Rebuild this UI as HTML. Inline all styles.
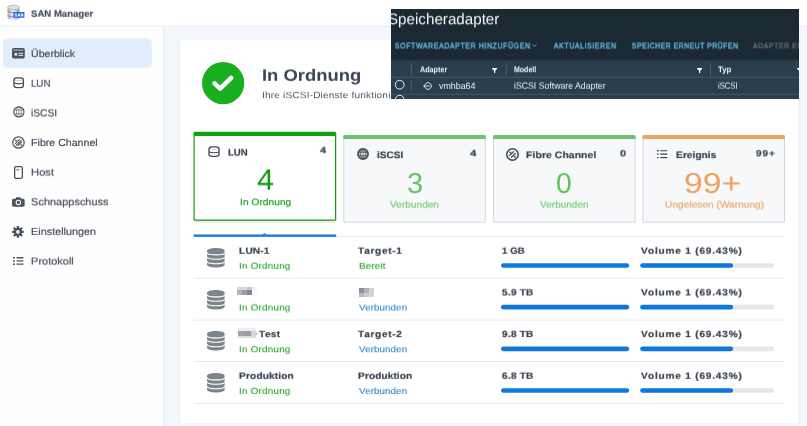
<!DOCTYPE html>
<html><head><meta charset="utf-8"><title>SAN Manager</title>
<style>
html,body{margin:0;padding:0}
body{width:807px;height:426px;overflow:hidden;position:relative;background:#f4f7fb;font-family:"Liberation Sans",sans-serif}
.abs{position:absolute}
.t{position:absolute;white-space:pre;line-height:1;text-rendering:geometricPrecision;transform-origin:0 50%;font-family:"Liberation Sans",sans-serif}
#hdr{left:0;top:0;width:807px;height:26px;background:#fff;border-bottom:1px solid #e3e8ee}
#side{left:0;top:27px;width:163px;height:399px;background:#fbfcfd;border-right:1px solid #e6ebf1}
#act{left:3px;top:38.5px;width:149px;height:29.5px;background:#e2edfb;border-radius:4px}
#panel{left:179px;top:38.5px;width:620px;height:385px;background:#fff;border:1px solid #e7ebf1;box-sizing:border-box}
.card{position:absolute;top:135px;width:142.5px;height:88px;box-sizing:border-box;background:#f5f8fa;border:1px solid #dfe4ea;border-top:4px solid #6cc56a;border-radius:1px}
.row{position:absolute;left:194px;width:591px;height:1px;background:#e6eaef}
.bar{position:absolute;height:4.6px;border-radius:3px;background:#e4e7ea}
.bar i{position:absolute;left:0;top:0;height:100%;border-radius:3px;background:#0f7be0;display:block}
.px{position:absolute}
svg{position:absolute;overflow:visible}
#ov{left:391.2px;top:9px;width:408px;height:89.6px;background:#1b2a32;overflow:hidden}
</style></head><body>
<svg width="0" height="0" style="display:none">
<defs>
<symbol id="db" viewBox="0 0 18 20">
 <path fill="#7c858a" d="M0 2.900C0 1.300 4 0 9 0s9 1.300 9 2.900V17.100c0 1.600-4 2.900-9 2.900s-9-1.300-9-2.900z"/>
 <path fill="none" stroke="#fff" stroke-width="1.100" d="M0 4.500c0 1.400 4 2.500 9 2.500s9-1.100 9-2.500M0 9c0 1.400 4 2.500 9 2.500s9-1.100 9-2.500M0 13.500c0 1.400 4 2.500 9 2.500s9-1.100 9-2.500"/>
</symbol>
<symbol id="cyl" viewBox="0 0 12 12">
 <path fill="none" stroke="#434a53" stroke-width="1.350" d="M1 3.500Q1 1.100 3.800 .95Q6 .85 8.200 .95Q11 1.100 11 3.500V8.500Q11 10.900 8.200 11.050Q6 11.150 3.800 11.050Q1 10.900 1 8.500z"/>
 <path fill="none" stroke="#434a53" stroke-width="1.100" d="M1 5.900c.8 .9 2.600 1.200 5 1.200s4.200-.3 5-1.200"/>
 <path fill="none" stroke="#434a53" stroke-width=".5" opacity=".55" d="M1.700 2.800c.9 .7 2.400 1 4.300 1s3.400-.3 4.300-1"/>
</symbol>
<symbol id="globe" viewBox="0 0 12 12">
 <circle cx="6" cy="6" r="5.200" fill="none" stroke="#4b545e" stroke-width="1.200"/>
 <ellipse cx="6" cy="6" rx="2.500" ry="5.200" fill="none" stroke="#4b545e" stroke-width=".6"/>
 <path stroke="#4b545e" stroke-width=".6" fill="none" d="M1.300 4.100h9.400M1.300 7.900h9.400M6 .8v10.400"/>
</symbol>
<symbol id="fc" viewBox="0 0 13 13">
 <circle cx="6.500" cy="6.500" r="5.700" fill="none" stroke="#4b545e" stroke-width="1.200"/>
 <path stroke="#4b545e" stroke-width="1.100" stroke-linecap="round" fill="none" d="M3.500 7.400l3.800-3.800M4.300 9.200l4.900-4.900M5.900 9.700l3.700-3.700"/>
 <circle cx="3.900" cy="4.400" r=".9" fill="#4b545e"/><circle cx="9.200" cy="8.800" r=".9" fill="#4b545e"/>
</symbol>
<symbol id="list" viewBox="0 0 11 9">
 <path fill="#4b545e" d="M0 0h2v1.700H0zM0 3.650h2v1.700H0zM0 7.300h2V9H0zM3.600 .1h7.400v1.500H3.600zM3.600 3.750h7.400v1.500H3.600zM3.600 7.400h7.400v1.500H3.600z"/>
</symbol>
<symbol id="globe2" viewBox="0 0 12 12">
 <circle cx="6" cy="6" r="5.100" fill="#c2c6ca" stroke="#454b54" stroke-width="1.650"/>
 <ellipse cx="6" cy="6" rx="2.300" ry="4.600" fill="none" stroke="#50565e" stroke-width=".9"/>
 <path stroke="#50565e" stroke-width=".9" fill="none" d="M1.500 4.300h9M1.500 7.700h9M6 1.200v9.600"/>
 <rect x="4" y="4.800" width="1.500" height="2.400" fill="#e9ebee"/><rect x="6.500" y="4.800" width="1.500" height="2.400" fill="#e9ebee"/>
</symbol>
<symbol id="fc2" viewBox="0 0 13 13">
 <circle cx="6.500" cy="6.500" r="5.700" fill="none" stroke="#434a53" stroke-width="1.600"/>
 <path stroke="#434a53" stroke-width="1.250" stroke-linecap="round" fill="none" d="M3.700 7.500l3.700-3.700M5.500 9.300l3.800-3.800"/>
 <circle cx="4.300" cy="4.500" r="1" fill="#434a53"/><circle cx="8.800" cy="8.700" r="1" fill="#434a53"/>
</symbol>
<symbol id="list2" viewBox="0 0 11 9">
 <path fill="#383d45" d="M0 .1h1.700v1.400H0zM0 3.800h1.700v1.400H0zM0 7.500h1.700v1.400H0zM3.400 .15h7.600v1.300H3.400zM3.400 3.850h7.600v1.300H3.400zM3.400 7.550h7.600v1.300H3.400z"/>
</symbol>
<symbol id="filt" viewBox="0 0 6 6"><path fill="#fff" d="M0 0h6v.9L3.700 3.300V6H2.300V3.300L0 .9z"/></symbol>
</defs></svg>

<svg style="left:0;top:0" width="807" height="426" viewBox="0 0 807 426">
 <rect x="0" y="0" width="807" height="26.300" fill="#fff"/>
 <rect x="0" y="25.800" width="807" height="1" fill="#e9edf1"/>
 <rect x="0" y="26.800" width="163.200" height="400" fill="#fefefe"/>
 <rect x="162.900" y="26.800" width="1.200" height="400" fill="#e9edf1"/>
 <rect x="3" y="38.500" width="148.800" height="29.200" rx="4" fill="#e3eefc"/>
 <rect x="179.300" y="38.800" width="619.500" height="385.100" fill="#fff" stroke="#ebeff4" stroke-width="1"/>
</svg>
<!-- header app icon -->
<svg style="left:6.500px;top:5px" width="19" height="16" viewBox="0 0 19 16">
 <defs><linearGradient id="g1" x1="0" x2="1"><stop offset="0" stop-color="#aeb2b5"/><stop offset=".45" stop-color="#eceeef"/><stop offset="1" stop-color="#9fa3a6"/></linearGradient></defs>
 <path fill="url(#g1)" d="M.6 2.400C.6 1.200 3.200 .2 6.500 .2s5.900 1 5.900 2.200v10.400c0 1.200-2.600 2.200-5.900 2.200S.6 14 .6 12.800z"/>
 <path fill="none" stroke="#7f8589" stroke-width=".9" d="M.6 5.600c0 1.200 2.600 2.100 5.900 2.100s5.900-.9 5.900-2.100M.6 9.800c0 1.200 2.600 2.100 5.900 2.100s5.900-.9 5.900-2.100"/>
 <ellipse cx="6.500" cy="2.400" rx="5.900" ry="2.100" fill="#dfe1e3" stroke="#9ea3a7" stroke-width=".6"/>
 <rect x="6.500" y="6.900" width="10.900" height="5.900" rx=".7" fill="#1d6df0"/>
 <path fill="#fff" d="M8 8.400h1.900v.7H8.800v.5h1.100v1.900H8v-.7h1.100v-.5H8zM10.600 11.500l.9-3.100h.9l.9 3.100h-.8l-.1-.6h-.9l-.1 .6zM13.800 8.400h.8l.9 1.800V8.400h.7v3.100h-.8l-.9-1.800v1.800h-.7z"/>
</svg>

<!-- sidebar icons -->
<svg style="left:12.200px;top:48.200px" width="12.800" height="10.600" viewBox="0 0 12.800 10.600">
 <rect x="0" y="0" width="12.800" height="10.600" rx="1.800" fill="#4b545e"/>
 <rect x="1.400" y="1.700" width="10" height=".8" fill="#cfdcec"/>
 <circle cx="3.900" cy="6.200" r="1.500" fill="#e2edfb"/>
 <rect x="6.500" y="4.800" width="4.600" height="1" fill="#e2edfb"/><rect x="6.500" y="6.900" width="4.600" height="1" fill="#e2edfb"/>
</svg>
<svg style="left:12.900px;top:77.300px" width="11.400" height="11.600" viewBox="0 0 12 12" preserveAspectRatio="none"><use href="#cyl"/></svg>
<svg style="left:12.900px;top:106.200px" width="11.800" height="11.800" viewBox="0 0 12 12"><use href="#globe"/></svg>
<svg style="left:12px;top:135.600px" width="13" height="13"><use href="#fc"/></svg>
<svg style="left:14px;top:165.500px" width="9" height="13" viewBox="0 0 9 13">
 <rect x=".65" y=".65" width="7.700" height="11.700" rx="1.300" fill="none" stroke="#4b545e" stroke-width="1.300"/>
 <path stroke="#4b545e" stroke-width="1" d="M2.300 3.800h2.800"/>
</svg>
<svg style="left:12.200px;top:196.800px" width="12.700" height="9.700" viewBox="0 0 13 10">
 <path fill="#4b545e" d="M1.500 1.700h2l.9-1.500h4.200l.9 1.500h2c.8 0 1.500.7 1.500 1.500v5.300c0 .8-.7 1.500-1.500 1.500h-10C.7 10 0 9.300 0 8.500V3.200c0-.8.7-1.500 1.500-1.500z"/>
 <circle cx="6.500" cy="5.600" r="2.300" fill="none" stroke="#fbfcfd" stroke-width="1.100"/>
</svg>
<svg style="left:12.400px;top:225.600px" width="11.800" height="11.800" viewBox="-5.900 -5.900 11.800 11.800">
 <g fill="#4b545e">
  <circle r="4.200"/>
  <g id="tooth"><rect x="-1.150" y="-5.900" width="2.300" height="2.600" rx=".4"/></g>
  <use href="#tooth" transform="rotate(45)"/><use href="#tooth" transform="rotate(90)"/><use href="#tooth" transform="rotate(135)"/><use href="#tooth" transform="rotate(180)"/><use href="#tooth" transform="rotate(225)"/><use href="#tooth" transform="rotate(270)"/><use href="#tooth" transform="rotate(315)"/>
 </g>
 <circle r="1.800" fill="#fbfcfd"/>
</svg>
<svg style="left:12.900px;top:256.900px" width="10.600" height="7.900" viewBox="0 0 11 9" preserveAspectRatio="none"><use href="#list"/></svg>

<!-- status circle -->
<svg style="left:202.200px;top:61.600px" width="42.300" height="42.300" viewBox="0 0 42.300 42.300">
 <circle cx="21.150" cy="21.150" r="21.150" fill="#1aae21"/>
 <path fill="none" stroke="#fff" stroke-width="4.400" stroke-linecap="round" stroke-linejoin="round" d="M12.500 21.300l5.600 5.400L29.200 15.900"/>
</svg>

<!-- cards -->
<svg style="left:0;top:0" width="807" height="426" viewBox="0 0 807 426">
 <defs><filter id="sh" x="-10%" y="-10%" width="120%" height="130%"><feGaussianBlur stdDeviation="1.300"/></filter></defs>
 <rect x="194.500" y="134" width="141" height="88" fill="#5a5560" opacity=".22" filter="url(#sh)"/>
 <rect x="193.500" y="131.800" width="142.700" height="88.900" rx="1.500" fill="#12a012"/>
 <rect x="194.700" y="136.100" width="140.300" height="83.400" rx=".5" fill="#fff"/>
 <g>
  <rect x="343.300" y="135" width="142.500" height="87.700" rx="1.500" fill="#d3d8de"/>
  <rect x="344.300" y="136" width="140.500" height="85.800" rx=".8" fill="#f6f8fa"/>
  <path fill="#6ac569" d="M343.300 136.500a1.500 1.500 0 0 1 1.500-1.500h139.500a1.500 1.500 0 0 1 1.500 1.500v2.400h-142.500z"/>
 </g>
 <g transform="translate(149.800 0)">
  <rect x="343.300" y="135" width="142.500" height="87.700" rx="1.500" fill="#d3d8de"/>
  <rect x="344.300" y="136" width="140.500" height="85.800" rx=".8" fill="#f6f8fa"/>
  <path fill="#6ac569" d="M343.300 136.500a1.500 1.500 0 0 1 1.500-1.500h139.500a1.500 1.500 0 0 1 1.500 1.500v2.400h-142.500z"/>
 </g>
 <g transform="translate(299.200 0)">
  <rect x="343.300" y="135" width="142.500" height="87.700" rx="1.500" fill="#d3d8de"/>
  <rect x="344.300" y="136" width="140.500" height="85.800" rx=".8" fill="#f6f8fa"/>
  <path fill="#f0a35d" d="M343.300 136.500a1.500 1.500 0 0 1 1.500-1.500h139.500a1.500 1.500 0 0 1 1.500 1.500v2.400h-142.500z"/>
 </g>
</svg>
<svg style="left:208.100px;top:145.500px" width="12" height="11.300" viewBox="0 0 12 12" preserveAspectRatio="none"><use href="#cyl"/></svg>
<svg style="left:356.900px;top:147.700px" width="12" height="12"><use href="#globe2"/></svg>
<svg style="left:506.200px;top:147.500px" width="13" height="13"><use href="#fc2"/></svg>
<svg style="left:656.500px;top:149.700px" width="10.500" height="8.400" viewBox="0 0 11 9" preserveAspectRatio="none"><use href="#list2"/></svg>

<!-- tab indicator line -->
<svg style="left:0;top:0" width="807" height="426" viewBox="0 0 807 426">
 <rect x="336" y="235.900" width="449" height="1" fill="#eaedf1"/>
 <rect x="193.700" y="234.500" width="142.500" height="2.300" fill="#1077db"/>
 <path fill="#1077db" d="M262.200 234.600L264.500 233.100L266.800 234.600z"/>
 <rect x="501" y="263.15" width="128.200" height="4.600" rx="2.300" fill="#1077db"/>
 <rect x="640.200" y="263.15" width="134" height="4.600" rx="2.300" fill="#e5e8ea"/>
 <rect x="640.200" y="263.15" width="92.900" height="4.600" rx="2.300" fill="#1077db"/>
 <rect x="501" y="304.85" width="128.200" height="4.600" rx="2.300" fill="#1077db"/>
 <rect x="640.200" y="304.85" width="134" height="4.600" rx="2.300" fill="#e5e8ea"/>
 <rect x="640.200" y="304.85" width="92.900" height="4.600" rx="2.300" fill="#1077db"/>
 <rect x="501" y="346.55" width="128.200" height="4.600" rx="2.300" fill="#1077db"/>
 <rect x="640.200" y="346.55" width="134" height="4.600" rx="2.300" fill="#e5e8ea"/>
 <rect x="640.200" y="346.55" width="92.900" height="4.600" rx="2.300" fill="#1077db"/>
 <rect x="501" y="388.25" width="128.200" height="4.600" rx="2.300" fill="#1077db"/>
 <rect x="640.200" y="388.25" width="134" height="4.600" rx="2.300" fill="#e5e8ea"/>
 <rect x="640.200" y="388.25" width="92.900" height="4.600" rx="2.300" fill="#1077db"/>
 <rect x="194" y="277.800" width="591" height="1" fill="#e6eaef"/>
 <rect x="194" y="319.600" width="591" height="1" fill="#e6eaef"/>
 <rect x="194" y="361" width="591" height="1" fill="#e6eaef"/>
 <rect x="194" y="402.800" width="591" height="1" fill="#e6eaef"/>
</svg>
<!-- rows -->

<svg style="left:207.300px;top:248px" width="17.800" height="19.700"><use href="#db"/></svg>
<svg style="left:207.300px;top:289.700px" width="17.800" height="19.700"><use href="#db"/></svg>
<svg style="left:207.300px;top:331.400px" width="17.800" height="19.700"><use href="#db"/></svg>
<svg style="left:207.300px;top:373.100px" width="17.800" height="19.700"><use href="#db"/></svg>


<!-- pixelated (redacted) blocks -->
<svg style="left:237px;top:287px" width="20" height="7.700" viewBox="0 0 20 7.700" shape-rendering="crispEdges">
 <rect x="0" y="0" width="5" height="2.900" fill="#d5d6da"/><rect x="5" y="0" width="5" height="2.900" fill="#d7d8db"/><rect x="10" y="0" width="4.900" height="2.900" fill="#c9cacf"/>
 <rect x="0" y="2.900" width="5" height="4.800" fill="#b1b4bb"/><rect x="5" y="2.900" width="5" height="4.800" fill="#9b9da4"/><rect x="10" y="2.900" width="4.900" height="4.800" fill="#80868f"/>
 <rect x="14.900" y="0" width="4.900" height="2.900" fill="#f0f3f4"/><rect x="14.900" y="2.900" width="4.900" height="4.800" fill="#f8f9fa"/>
</svg>
<svg style="left:359px;top:288px" width="14.800" height="8.800" viewBox="0 0 14.800 8.800" shape-rendering="crispEdges">
 <rect x="0" y="0" width="4.950" height="4.600" fill="#908e9c"/><rect x="4.950" y="0" width="4.950" height="4.600" fill="#b1b1b7"/><rect x="9.900" y="0" width="4.900" height="4.600" fill="#cfd2d6"/>
 <rect x="0" y="4.600" width="4.950" height="4.200" fill="#bbb9c1"/><rect x="4.950" y="4.600" width="4.950" height="4.200" fill="#cdd0d5"/><rect x="9.900" y="4.600" width="4.900" height="4.200" fill="#d0d3d6"/>
</svg>
<svg style="left:238px;top:328px" width="18" height="9.800" viewBox="0 0 18 9.800" shape-rendering="crispEdges">
 <rect x="0" y="0" width="18" height="2.900" fill="#ededef"/>
 <rect x="0" y="2.900" width="5" height="4.900" fill="#a2a2a5"/><rect x="5" y="2.900" width="3.500" height="4.900" fill="#9aa0aa"/><rect x="8.500" y="2.900" width="4.500" height="4.900" fill="#9a9a9c"/><rect x="13" y="2.900" width="5" height="4.900" fill="#d3d6da"/>
 <rect x="0" y="7.800" width="18" height="2" fill="#dddee1"/>
</svg>
<svg style="left:256.300px;top:333px" width="2" height="2"><rect x="0" y=".1" width="1.300" height="1.200" fill="#8a919a"/></svg>

<span class="t" style="left:30.7px;top:9.0px;font-size:9.3px;font-weight:700;color:#454f5b;transform:translateY(0.70px) rotateX(0.01deg) scaleX(1.029);-webkit-text-stroke:0.18px #454f5b;">SAN Manager</span>
<span class="t" style="left:30.8px;top:50.0px;font-size:10.2px;font-weight:400;color:#444e5a;transform:translateY(0.10px) rotateX(0.01deg) scaleX(1.038);-webkit-text-stroke:0.2px #444e5a;">Überblick</span>
<span class="t" style="left:30.8px;top:79.0px;font-size:10.2px;font-weight:400;color:#444e5a;transform:translateY(0.73px) rotateX(0.01deg) scaleX(0.956);-webkit-text-stroke:0.2px #444e5a;">LUN</span>
<span class="t" style="left:30.8px;top:109.0px;font-size:10.2px;font-weight:400;color:#444e5a;transform:translateY(0.36px) rotateX(0.01deg) scaleX(1.006);-webkit-text-stroke:0.2px #444e5a;">iSCSI</span>
<span class="t" style="left:30.8px;top:138.0px;font-size:10.2px;font-weight:400;color:#444e5a;transform:translateY(0.99px) rotateX(0.01deg) scaleX(1.041);-webkit-text-stroke:0.2px #444e5a;">Fibre Channel</span>
<span class="t" style="left:30.8px;top:168.0px;font-size:10.2px;font-weight:400;color:#444e5a;transform:translateY(0.62px) rotateX(0.01deg) scaleX(1.093);-webkit-text-stroke:0.2px #444e5a;">Host</span>
<span class="t" style="left:30.8px;top:198.0px;font-size:10.2px;font-weight:400;color:#444e5a;transform:translateY(0.25px) rotateX(0.01deg) scaleX(1.077);-webkit-text-stroke:0.2px #444e5a;">Schnappschuss</span>
<span class="t" style="left:30.8px;top:227.0px;font-size:10.2px;font-weight:400;color:#444e5a;transform:translateY(0.88px) rotateX(0.01deg) scaleX(1.063);-webkit-text-stroke:0.2px #444e5a;">Einstellungen</span>
<span class="t" style="left:30.8px;top:257.0px;font-size:10.2px;font-weight:400;color:#444e5a;transform:translateY(0.51px) rotateX(0.01deg) scaleX(1.077);-webkit-text-stroke:0.2px #444e5a;">Protokoll</span>
<span class="t" style="left:262.3px;top:67.0px;font-size:16.5px;font-weight:700;color:#3a4452;transform:translateY(0.80px) rotateX(0.01deg) scaleX(1.115);">In Ordnung</span>
<span class="t" style="left:262.3px;top:91.0px;font-size:9.0px;font-weight:400;color:#4a5462;letter-spacing:0.151px;transform:translateY(0.10px) rotateX(0.01deg) scaleX(1.120); ">Ihre iSCSI-Dienste funktioni</span>
<span class="t" style="left:227.8px;top:147.0px;font-size:9.4px;font-weight:700;color:#353f4b;transform:translateY(0.60px) rotateX(0.01deg) scaleX(1.022);-webkit-text-stroke:0.18px #353f4b;">LUN</span>
<span class="t" style="left:320.0px;top:146.0px;font-size:9.0px;font-weight:700;color:#353f4b;transform:translateY(0.20px) rotateX(0.01deg) scaleX(1.196);-webkit-text-stroke:0.18px #353f4b;">4</span>
<span class="t" style="left:256.5px;top:165.0px;font-size:29.5px;font-weight:400;color:#0f9d10;transform:translateY(0.60px) rotateX(0.01deg) scaleX(1.035);">4</span>
<span class="t" style="left:240.0px;top:198.0px;font-size:9.2px;font-weight:400;color:#0f9d10;transform:translateY(0.10px) rotateX(0.01deg) scaleX(1.113);-webkit-text-stroke:0.15px #0f9d10;">In Ordnung</span>
<span class="t" style="left:376.9px;top:150.0px;font-size:9.4px;font-weight:700;color:#353f4b;transform:translateY(0.10px) rotateX(0.01deg) scaleX(1.073);-webkit-text-stroke:0.18px #353f4b;">iSCSI</span>
<span class="t" style="left:470.4px;top:149.0px;font-size:9.0px;font-weight:700;color:#353f4b;transform:translateY(0.30px) rotateX(0.01deg) scaleX(1.236);-webkit-text-stroke:0.18px #353f4b;">4</span>
<span class="t" style="left:406.6px;top:169.0px;font-size:28.6px;font-weight:400;color:#62c262;transform:translateY(0.90px) rotateX(0.01deg) scaleX(1.018);">3</span>
<span class="t" style="left:390.4px;top:200.0px;font-size:9.2px;font-weight:400;color:#73c973;transform:translateY(0.60px) rotateX(0.01deg) scaleX(1.100);-webkit-text-stroke:0.15px #73c973;">Verbunden</span>
<span class="t" style="left:526.4px;top:150.0px;font-size:9.4px;font-weight:700;color:#353f4b;letter-spacing:0.014px;transform:translateY(0.10px) rotateX(0.01deg) scaleX(1.120);-webkit-text-stroke:0.18px #353f4b;">Fibre Channel</span>
<span class="t" style="left:620.1px;top:149.0px;font-size:9.0px;font-weight:700;color:#353f4b;transform:translateY(0.30px) rotateX(0.01deg) scaleX(1.196);-webkit-text-stroke:0.18px #353f4b;">0</span>
<span class="t" style="left:555.9px;top:169.0px;font-size:28.6px;font-weight:400;color:#62c262;transform:translateY(0.90px) rotateX(0.01deg) scaleX(0.987);">0</span>
<span class="t" style="left:540.4px;top:200.0px;font-size:9.2px;font-weight:400;color:#73c973;transform:translateY(0.60px) rotateX(0.01deg) scaleX(1.091);-webkit-text-stroke:0.15px #73c973;">Verbunden</span>
<span class="t" style="left:675.9px;top:150.0px;font-size:9.4px;font-weight:700;color:#353f4b;transform:translateY(0.10px) rotateX(0.01deg) scaleX(1.089);-webkit-text-stroke:0.18px #353f4b;">Ereignis</span>
<span class="t" style="left:756.1px;top:149.0px;font-size:9.0px;font-weight:700;color:#353f4b;letter-spacing:0.752px;transform:translateY(0.30px) rotateX(0.01deg) scaleX(1.120);-webkit-text-stroke:0.18px #353f4b;">99+</span>
<span class="t" style="left:684.4px;top:169.0px;font-size:28.6px;font-weight:400;color:#f0a25c;transform:translateY(0.90px) rotateX(0.01deg) scaleX(1.179);">99+</span>
<span class="t" style="left:664.6px;top:200.0px;font-size:9.2px;font-weight:400;color:#eda667;transform:translateY(0.60px) rotateX(0.01deg) scaleX(1.106);-webkit-text-stroke:0.15px #eda667;">Ungelesen (Warnung)</span>
<span class="t" style="left:239.0px;top:246.0px;font-size:9.1px;font-weight:700;color:#353f4b;letter-spacing:0.046px;transform:translateY(0.70px) rotateX(0.01deg) scaleX(1.120);-webkit-text-stroke:0.18px #353f4b;">LUN-1</span>
<span class="t" style="left:239.0px;top:261.0px;font-size:8.8px;font-weight:400;color:#1a9f1b;letter-spacing:0.189px;transform:translateY(0.80px) rotateX(0.01deg) scaleX(1.120);-webkit-text-stroke:0.05px #1a9f1b;">In Ordnung</span>
<span class="t" style="left:358.4px;top:246.0px;font-size:9.1px;font-weight:700;color:#353f4b;letter-spacing:0.545px;transform:translateY(0.70px) rotateX(0.01deg) scaleX(1.120);-webkit-text-stroke:0.18px #353f4b;">Target-1</span>
<span class="t" style="left:358.6px;top:261.0px;font-size:8.8px;font-weight:400;color:#1a9f1b;letter-spacing:0.117px;transform:translateY(0.80px) rotateX(0.01deg) scaleX(1.120);-webkit-text-stroke:0.05px;">Bereit</span>
<span class="t" style="left:501.6px;top:246.0px;font-size:9.1px;font-weight:700;color:#353f4b;transform:translateY(0.70px) rotateX(0.01deg) scaleX(1.064);-webkit-text-stroke:0.18px #353f4b;">1 GB</span>
<span class="t" style="left:640.6px;top:246.0px;font-size:9.1px;font-weight:700;color:#353f4b;letter-spacing:0.676px;transform:translateY(0.70px) rotateX(0.01deg) scaleX(1.120);-webkit-text-stroke:0.18px #353f4b;">Volume 1 (69.43%)</span>
<span class="t" style="left:239.0px;top:303.0px;font-size:8.8px;font-weight:400;color:#1a9f1b;letter-spacing:0.189px;transform:translateY(0.50px) rotateX(0.01deg) scaleX(1.120);-webkit-text-stroke:0.05px #1a9f1b;">In Ordnung</span>
<span class="t" style="left:358.6px;top:303.0px;font-size:8.8px;font-weight:400;color:#1f83c8;letter-spacing:0.037px;transform:translateY(0.50px) rotateX(0.01deg) scaleX(1.120);-webkit-text-stroke:0.05px;">Verbunden</span>
<span class="t" style="left:501.6px;top:288.0px;font-size:9.1px;font-weight:700;color:#353f4b;letter-spacing:0.130px;transform:translateY(0.40px) rotateX(0.01deg) scaleX(1.120);-webkit-text-stroke:0.18px #353f4b;">5.9 TB</span>
<span class="t" style="left:640.6px;top:288.0px;font-size:9.1px;font-weight:700;color:#353f4b;letter-spacing:0.676px;transform:translateY(0.40px) rotateX(0.01deg) scaleX(1.120);-webkit-text-stroke:0.18px #353f4b;">Volume 1 (69.43%)</span>
<span class="t" style="left:258.7px;top:330.0px;font-size:9.1px;font-weight:700;color:#353f4b;letter-spacing:0.269px;transform:translateY(0.10px) rotateX(0.01deg) scaleX(1.120);-webkit-text-stroke:0.18px #353f4b;">Test</span>
<span class="t" style="left:239.0px;top:345.0px;font-size:8.8px;font-weight:400;color:#1a9f1b;letter-spacing:0.189px;transform:translateY(0.20px) rotateX(0.01deg) scaleX(1.120);-webkit-text-stroke:0.05px #1a9f1b;">In Ordnung</span>
<span class="t" style="left:358.4px;top:330.0px;font-size:9.1px;font-weight:700;color:#353f4b;letter-spacing:0.558px;transform:translateY(0.10px) rotateX(0.01deg) scaleX(1.120);-webkit-text-stroke:0.18px #353f4b;">Target-2</span>
<span class="t" style="left:358.6px;top:345.0px;font-size:8.8px;font-weight:400;color:#1f83c8;letter-spacing:0.037px;transform:translateY(0.20px) rotateX(0.01deg) scaleX(1.120);-webkit-text-stroke:0.05px;">Verbunden</span>
<span class="t" style="left:501.6px;top:330.0px;font-size:9.1px;font-weight:700;color:#353f4b;letter-spacing:0.130px;transform:translateY(0.10px) rotateX(0.01deg) scaleX(1.120);-webkit-text-stroke:0.18px #353f4b;">9.8 TB</span>
<span class="t" style="left:640.6px;top:330.0px;font-size:9.1px;font-weight:700;color:#353f4b;letter-spacing:0.676px;transform:translateY(0.10px) rotateX(0.01deg) scaleX(1.120);-webkit-text-stroke:0.18px #353f4b;">Volume 1 (69.43%)</span>
<span class="t" style="left:239.0px;top:371.0px;font-size:9.1px;font-weight:700;color:#353f4b;letter-spacing:0.083px;transform:translateY(0.80px) rotateX(0.01deg) scaleX(1.120);-webkit-text-stroke:0.18px #353f4b;">Produktion</span>
<span class="t" style="left:239.0px;top:386.0px;font-size:8.8px;font-weight:400;color:#1a9f1b;letter-spacing:0.189px;transform:translateY(0.90px) rotateX(0.01deg) scaleX(1.120);-webkit-text-stroke:0.05px #1a9f1b;">In Ordnung</span>
<span class="t" style="left:358.4px;top:371.0px;font-size:9.1px;font-weight:700;color:#353f4b;letter-spacing:0.034px;transform:translateY(0.80px) rotateX(0.01deg) scaleX(1.120);-webkit-text-stroke:0.18px #353f4b;">Produktion</span>
<span class="t" style="left:358.6px;top:386.0px;font-size:8.8px;font-weight:400;color:#1f83c8;letter-spacing:0.037px;transform:translateY(0.90px) rotateX(0.01deg) scaleX(1.120);-webkit-text-stroke:0.05px;">Verbunden</span>
<span class="t" style="left:501.6px;top:371.0px;font-size:9.1px;font-weight:700;color:#353f4b;letter-spacing:0.130px;transform:translateY(0.80px) rotateX(0.01deg) scaleX(1.120);-webkit-text-stroke:0.18px #353f4b;">6.8 TB</span>
<span class="t" style="left:640.6px;top:371.0px;font-size:9.1px;font-weight:700;color:#353f4b;letter-spacing:0.676px;transform:translateY(0.80px) rotateX(0.01deg) scaleX(1.120);-webkit-text-stroke:0.18px #353f4b;">Volume 1 (69.43%)</span>

<!-- overlay -->
<div id="ov" class="abs">
 <svg style="left:0;top:0" width="408" height="90" viewBox="0 0 408 90">
  <rect x="0" y="51.200" width="408" height="40" fill="#2a3f4d"/>
  <rect x="0" y="67.800" width="408" height="1" fill="#43596a"/>
  <rect x="0" y="84.800" width="408" height="1" fill="#43596a"/>
  <rect x="19.800" y="54.600" width="1" height="12" fill="#4a6271"/>
  <rect x="114.800" y="54.600" width="1" height="12" fill="#4a6271"/>
  <rect x="319" y="54.600" width="1" height="12" fill="#4a6271"/>
  <rect x="19.800" y="71.500" width="1" height="10" fill="#4a6271"/>
 </svg>
 <svg style="left:4.100px;top:71.300px" width="9.400" height="9.400" viewBox="0 0 9.400 9.400"><circle cx="4.700" cy="4.700" r="4.400" fill="none" stroke="#e8eef1" stroke-width="1"/></svg>
 <svg style="left:4.100px;top:86.300px" width="9.400" height="9.400" viewBox="0 0 9.400 9.400"><circle cx="4.700" cy="4.700" r="4.400" fill="none" stroke="#e8eef1" stroke-width="1"/></svg>
 <svg style="left:101px;top:59.100px" width="5.300" height="5.200"><use href="#filt"/></svg>
 <svg style="left:305.700px;top:59.100px" width="5.300" height="5.200"><use href="#filt"/></svg>
 <svg style="left:406.300px;top:59.200px" width="5.200" height="5"><use href="#filt"/></svg>
 <svg style="left:32.300px;top:72.900px" width="8.800" height="8" viewBox="0 0 8.800 8"><path fill="none" stroke="#e8eef1" stroke-width=".95" stroke-linejoin="round" d="M3.900 .6L.7 4L3.900 7.400M.7 4H6.600M3.900 .6C6.800 .6 8.300 2.100 8.300 4S6.800 7.400 3.900 7.400"/></svg>
 <svg style="left:141px;top:34.800px" width="5" height="3.200" viewBox="0 0 5 3.200"><path fill="none" stroke="#4fb0d6" stroke-width=".9" d="M.4 .4l2.100 2.100L4.600 .4"/></svg>
 <span class="t" style="left:-3.6px;top:3.0px;font-size:15.4px;font-weight:400;color:#f4f7f8;transform:translateY(0.20px) rotateX(0.01deg) scaleX(0.986);">Speicheradapter</span>
<span class="t" style="left:4.2px;top:33.0px;font-size:8.0px;font-weight:400;color:#6ac4ea;letter-spacing:0.780px;transform:translateY(0.40px) rotateX(0.01deg) scaleX(0.860);-webkit-text-stroke:0.3px #6ac4ea;">SOFTWAREADAPTER HINZUFÜGEN</span>
<span class="t" style="left:163.3px;top:33.0px;font-size:8.0px;font-weight:400;color:#6ac4ea;letter-spacing:0.746px;transform:translateY(0.40px) rotateX(0.01deg) scaleX(0.860);-webkit-text-stroke:0.3px #6ac4ea;">AKTUALISIEREN</span>
<span class="t" style="left:240.8px;top:33.0px;font-size:8.0px;font-weight:400;color:#6ac4ea;letter-spacing:0.584px;transform:translateY(0.40px) rotateX(0.01deg) scaleX(0.860);-webkit-text-stroke:0.3px #6ac4ea;">SPEICHER ERNEUT PRÜFEN</span>
<span class="t" style="left:362.3px;top:33.0px;font-size:8.0px;font-weight:400;color:#6b7c85;letter-spacing:0.693px;transform:translateY(0.40px) rotateX(0.01deg) scaleX(0.860);-webkit-text-stroke:0.22px #6b7c85;">ADAPTER ENTFERNEN</span>
<span class="t" style="left:28.6px;top:57.0px;font-size:8.2px;font-weight:700;color:#f0f4f6;transform:translateY(0.20px) rotateX(0.01deg) scaleX(0.879);">Adapter</span>
<span class="t" style="left:123.2px;top:57.0px;font-size:8.2px;font-weight:700;color:#f0f4f6;transform:translateY(0.20px) rotateX(0.01deg) scaleX(0.856);">Modell</span>
<span class="t" style="left:327.3px;top:57.0px;font-size:8.2px;font-weight:700;color:#f0f4f6;transform:translateY(0.20px) rotateX(0.01deg) scaleX(0.960);">Typ</span>
<span class="t" style="left:47.5px;top:72.0px;font-size:9.4px;font-weight:400;color:#e8eef1;transform:translateY(0.00px) rotateX(0.01deg) scaleX(0.946);">vmhba64</span>
<span class="t" style="left:123.2px;top:71.0px;font-size:9.4px;font-weight:400;color:#e8eef1;transform:translateY(0.80px) rotateX(0.01deg) scaleX(0.930);">iSCSI Software Adapter</span>
<span class="t" style="left:327.3px;top:71.0px;font-size:9.4px;font-weight:400;color:#e8eef1;transform:translateY(0.80px) rotateX(0.01deg) scaleX(0.818);">iSCSI</span>
</div>
</body></html>
